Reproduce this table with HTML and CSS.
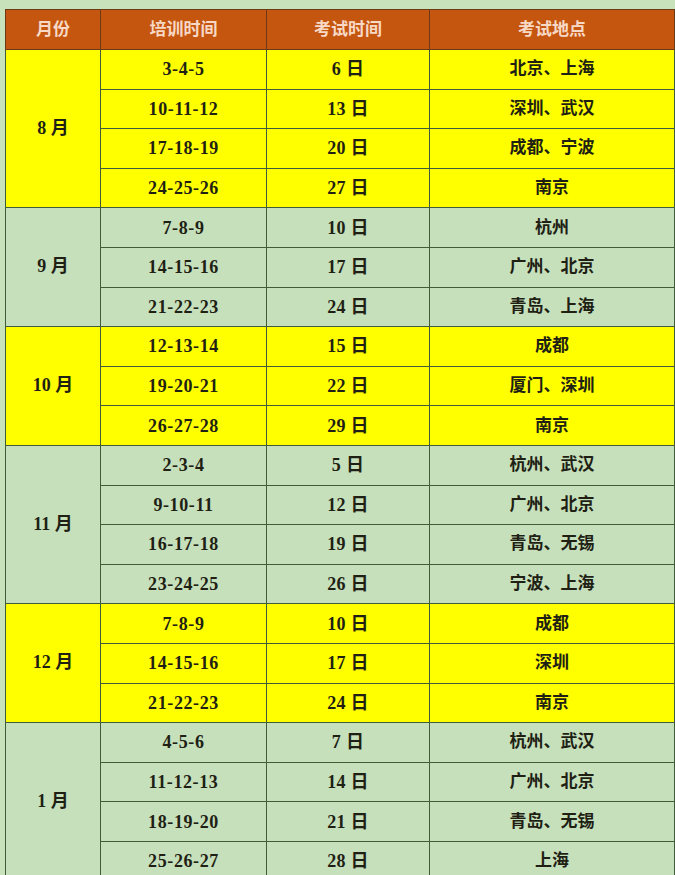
FILE: index.html
```html
<!DOCTYPE html>
<html lang="zh-CN">
<head>
<meta charset="utf-8">
<title>培训考试时间表</title>
<link rel="stylesheet" href="styles.css">
</head>
<body>
<div class="wrap">
<table class="sched">
  <colgroup>
    <col class="c1"><col class="c2"><col class="c3"><col class="c4">
  </colgroup>
  <thead>
    <tr><th>月份</th><th>培训时间</th><th>考试时间</th><th>考试地点</th></tr>
  </thead>
  <tbody class="y">
    <tr><td class="m" rowspan="4">8 月</td><td class="d">3-4-5</td><td class="e">6 日</td><td>北京、上海</td></tr>
    <tr><td class="d">10-11-12</td><td class="e">13 日</td><td>深圳、武汉</td></tr>
    <tr><td class="d">17-18-19</td><td class="e">20 日</td><td>成都、宁波</td></tr>
    <tr><td class="d">24-25-26</td><td class="e">27 日</td><td>南京</td></tr>
  </tbody>
  <tbody class="g">
    <tr><td class="m" rowspan="3">9 月</td><td class="d">7-8-9</td><td class="e">10 日</td><td>杭州</td></tr>
    <tr><td class="d">14-15-16</td><td class="e">17 日</td><td>广州、北京</td></tr>
    <tr><td class="d">21-22-23</td><td class="e">24 日</td><td>青岛、上海</td></tr>
  </tbody>
  <tbody class="y">
    <tr><td class="m" rowspan="3">10 月</td><td class="d">12-13-14</td><td class="e">15 日</td><td>成都</td></tr>
    <tr><td class="d">19-20-21</td><td class="e">22 日</td><td>厦门、深圳</td></tr>
    <tr><td class="d">26-27-28</td><td class="e">29 日</td><td>南京</td></tr>
  </tbody>
  <tbody class="g">
    <tr><td class="m" rowspan="4">11 月</td><td class="d">2-3-4</td><td class="e">5 日</td><td>杭州、武汉</td></tr>
    <tr><td class="d">9-10-11</td><td class="e">12 日</td><td>广州、北京</td></tr>
    <tr><td class="d">16-17-18</td><td class="e">19 日</td><td>青岛、无锡</td></tr>
    <tr><td class="d">23-24-25</td><td class="e">26 日</td><td>宁波、上海</td></tr>
  </tbody>
  <tbody class="y">
    <tr><td class="m" rowspan="3">12 月</td><td class="d">7-8-9</td><td class="e">10 日</td><td>成都</td></tr>
    <tr><td class="d">14-15-16</td><td class="e">17 日</td><td>深圳</td></tr>
    <tr><td class="d">21-22-23</td><td class="e">24 日</td><td>南京</td></tr>
  </tbody>
  <tbody class="g">
    <tr><td class="m" rowspan="4">1 月</td><td class="d">4-5-6</td><td class="e">7 日</td><td>杭州、武汉</td></tr>
    <tr><td class="d">11-12-13</td><td class="e">14 日</td><td>广州、北京</td></tr>
    <tr><td class="d">18-19-20</td><td class="e">21 日</td><td>青岛、无锡</td></tr>
    <tr><td class="d">25-26-27</td><td class="e">28 日</td><td>上海</td></tr>
  </tbody>
</table>
</div>
</body>
</html>
```
FILE: styles.css
```css
html, body {
  margin: 0;
  padding: 0;
  background: #c8e2bc;
}
.wrap {
  padding: 9px 0 0 5px;
}
.sched {
  border-collapse: collapse;
  table-layout: fixed;
  width: 669px;
  font-family: "Liberation Serif", "Noto Sans CJK SC", serif;
  font-size: 17px;
  line-height: 20px;
  font-weight: 700;
  color: #1f1f14;
}
.c1 { width: 95px; }
.c2 { width: 166px; }
.c3 { width: 163px; }
.c4 { width: 245px; }
.sched th,
.sched td {
  border: 1.5px solid #415c39;
  text-align: center;
  vertical-align: middle;
  padding: 0;
}
.sched thead tr { height: 40px; }
.sched th {
  background: #c5560f;
  color: #f7d9c6;
  border-color: #6b3a17;
  font-weight: 700;
}
.sched tbody tr { height: 39.6px; }
.sched td.d {
  font-size: 18px;
  letter-spacing: 0.6px;
}
.sched td.e {
  font-size: 18px;
  letter-spacing: 0.3px;
}
.sched td.m {
  font-size: 18px;
  padding-bottom: 2px;
}
.y td { background: #ffff00; }
.g td { background: #c6e0bc; }
```
